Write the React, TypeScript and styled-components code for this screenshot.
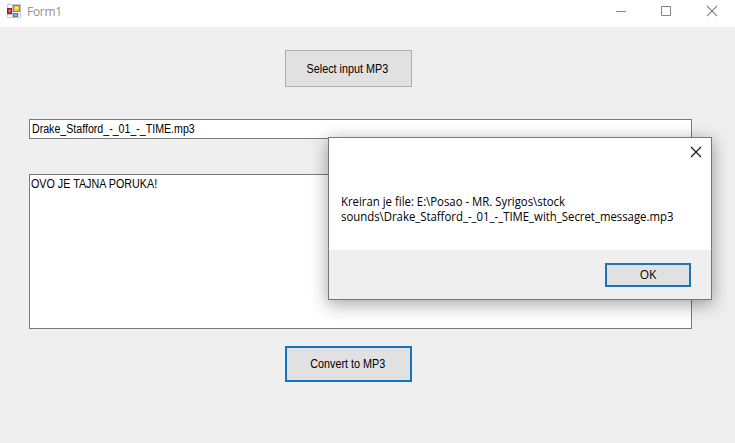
import React from "react";
import styled, { createGlobalStyle } from "styled-components";

const GlobalStyle = createGlobalStyle`
  * { box-sizing: border-box; }
  body { margin: 0; overflow: hidden; background: #efefef; }
`;

const Window = styled.main`
  position: relative;
  display: flex;
  flex-direction: column;
  width: 735px;
  height: 443px;
  background: #efefef;
  color: #000;
  font: 12px/15px "Liberation Sans", Arial, sans-serif;
`;

const TitleBar = styled.header`
  display: flex;
  align-items: flex-start;
  height: 27px;
  padding: 4px 17px 0 7px;
  background: #fff;
`;

const Title = styled.h1`
  flex: 1;
  margin: 0 0 0 6px;
  color: #929292;
  font: 400 12px/16px "Open Sans", "Noto Sans", sans-serif;
  letter-spacing: -0.3px;
`;

const WindowControls = styled.div`
  display: flex;
  gap: 34px;
  padding-top: 1px;
`;

const IconButton = styled.button`
  display: flex;
  width: 12px;
  height: 12px;
  padding: 0;
  border: 0;
  background: none;
`;

const Form = styled.section`
  display: flex;
  flex-direction: column;
  padding: 23px 43px 0 29px;
`;

const PushButton = styled.button<{ $active?: boolean; $height: number }>`
  width: 127px;
  height: ${({ $height }) => $height}px;
  margin-left: 256px;
  padding: 1px 2px 0 0;
  border: ${({ $active }) => ($active ? "2px solid #0d76c8" : "1px solid #adadad")};
  background: #e1e1e1;
  color: #000;
  font: inherit;
  white-space: nowrap;
`;

/* Condensed lettering of the classic form controls */
const Condensed = styled.span<{ $scale: number; $left?: boolean }>`
  display: inline-block;
  transform: scaleX(${({ $scale }) => $scale});
  transform-origin: ${({ $left }) => ($left ? "left" : "center")};
  white-space: nowrap;
`;

const Field = styled.div<{ $height: number; $top: number; $indent: number }>`
  height: ${({ $height }) => $height}px;
  margin-top: ${({ $top }) => $top}px;
  padding: 2px 0 0 ${({ $indent }) => $indent}px;
  border: 1px solid #7a7a7a;
  background: #fff;
`;

const ConvertRow = styled.div`
  display: flex;
  margin-top: 17px;
`;

const Dialog = styled.div`
  position: absolute;
  left: 328px;
  top: 137px;
  display: flex;
  flex-direction: column;
  width: 384px;
  height: 163px;
  border: 1px solid #777;
  background: #fff;
  box-shadow: 0 4px 16px 1px rgba(0, 0, 0, 0.34);
  font: 12px/15px "Open Sans", "Noto Sans", sans-serif;
`;

const DialogTop = styled.div`
  display: flex;
  justify-content: flex-end;
  padding: 8px 9px 0 0;
  height: 56px;
`;

const Message = styled.p`
  flex: 1;
  margin: 0;
  padding-left: 12px;
`;

const DialogFooter = styled.footer`
  display: flex;
  justify-content: flex-end;
  height: 49px;
  padding: 13px 20px 0 0;
  background: #efefef;
`;

const OkButton = styled.button`
  width: 86px;
  height: 24px;
  padding: 0 0 1px;
  border: 2px solid #1a74b8;
  background: #e1e1e1;
  color: #000;
  font: inherit;
`;

function FormIcon() {
  return (
    <svg width="14" height="14" viewBox="0 0 14 14" aria-hidden="true">
      <path d="M.5.5h13v13H.5zM.5 10.5h13M5.5.5v13" fill="#f7f8fc" stroke="#c3c9d6" />
      <rect x="6.5" y="1.5" width="6" height="6" fill="#f3c445" stroke="#a8811f" />
      <path d="M8 3h3v2H8z" fill="#ffe793" />
      <rect x=".5" y="4.5" width="4" height="5" fill="#c43a35" stroke="#951f1f" />
      <path d="M2 6h1.5v1.5H2z" fill="#efa296" />
      <rect x="6.5" y="9.5" width="4" height="3" fill="#86b1f3" stroke="#4a74c4" />
    </svg>
  );
}

function CloseIcon({ color }: { color: string }) {
  return (
    <svg width="12" height="12" viewBox="0 0 12 12" aria-hidden="true">
      <path d="M1 1l10 10M11 1L1 11" fill="none" stroke={color} strokeWidth="1.1" />
    </svg>
  );
}

export default function App() {
  return (
    <>
      <GlobalStyle />
      <Window>
        <TitleBar>
          <FormIcon />
          <Title>Form1</Title>
          <WindowControls>
            <IconButton aria-label="Minimize">
              <svg width="12" height="12"><path d="M2 6.5h10" stroke="#858585" /></svg>
            </IconButton>
            <IconButton aria-label="Maximize">
              <svg width="12" height="12"><path d="M1.5 1.5h9v9h-9z" fill="none" stroke="#858585" /></svg>
            </IconButton>
            <IconButton aria-label="Close"><CloseIcon color="#858585" /></IconButton>
          </WindowControls>
        </TitleBar>
        <Form>
          <PushButton $height={37}><Condensed $scale={0.9}>Select input MP3</Condensed></PushButton>
          <Field $height={20} $top={32} $indent={2}>
            <Condensed $left $scale={0.885}>Drake_Stafford_-_01_-_TIME.mp3</Condensed>
          </Field>
          <Field $height={155} $top={35} $indent={1}>
            <Condensed $left $scale={0.895}>OVO JE TAJNA PORUKA!</Condensed>
          </Field>
          <ConvertRow>
            <PushButton $active $height={36}><Condensed $scale={0.9}>Convert to MP3</Condensed></PushButton>
          </ConvertRow>
        </Form>
        <Dialog role="dialog">
          <DialogTop>
            <IconButton aria-label="Close message"><CloseIcon color="#111" /></IconButton>
          </DialogTop>
          <Message>
            <Condensed $left $scale={0.947}>
              Kreiran je file: E:\Posao - MR. Syrigos\stock
              <br />
              sounds\Drake_Stafford_-_01_-_TIME_with_Secret_message.mp3
            </Condensed>
          </Message>
          <DialogFooter><OkButton>OK</OkButton></DialogFooter>
        </Dialog>
      </Window>
    </>
  );
}
